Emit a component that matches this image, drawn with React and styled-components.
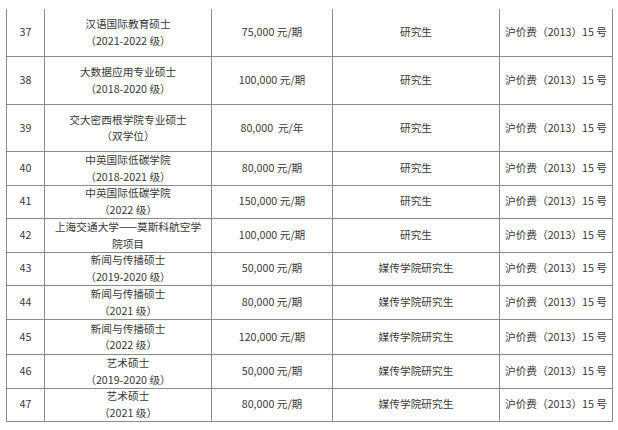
import styled, { createGlobalStyle } from "styled-components";

const GlobalStyle = createGlobalStyle`
  html, body {
    margin: 0;
    padding: 0;
    background: #ffffff;
  }
  body {
    font-family: "Noto Sans CJK SC", "Noto Sans", sans-serif;
    color: #333333;
  }
`;

const rows = [
  { no: 37, name: ["汉语国际教育硕士", "（2021-2022 级）"], fee: "75,000 元/期", who: "研究生", h: 48 },
  { no: 38, name: ["大数据应用专业硕士", "（2018-2020 级）"], fee: "100,000 元/期", who: "研究生", h: 48 },
  { no: 39, name: ["交大密西根学院专业硕士", "（双学位）"], fee: "80,000  元/年", who: "研究生", h: 47 },
  { no: 40, name: ["中英国际低碳学院", "（2018-2021 级）"], fee: "80,000 元/期", who: "研究生", h: 33 },
  { no: 41, name: ["中英国际低碳学院", "（2022 级）"], fee: "150,000 元/期", who: "研究生", h: 34 },
  { no: 42, name: ["上海交通大学——莫斯科航空学", "院项目"], fee: "100,000 元/期", who: "研究生", h: 33 },
  { no: 43, name: ["新闻与传播硕士", "（2019-2020 级）"], fee: "50,000 元/期", who: "媒传学院研究生", h: 34 },
  { no: 44, name: ["新闻与传播硕士", "（2021 级）"], fee: "80,000 元/期", who: "媒传学院研究生", h: 34 },
  { no: 45, name: ["新闻与传播硕士", "（2022 级）"], fee: "120,000 元/期", who: "媒传学院研究生", h: 35 },
  { no: 46, name: ["艺术硕士", "（2019-2020 级）"], fee: "50,000 元/期", who: "媒传学院研究生", h: 33 },
  { no: 47, name: ["艺术硕士", "（2021 级）"], fee: "80,000 元/期", who: "媒传学院研究生", h: 34 },
];

const App = () => {
  return (
    <>
      <GlobalStyle />
      <Page>
        <Table>
          {rows.map((r) => (
            <Row key={r.no} $h={r.h}>
              <Cell>{r.no}</Cell>
              <Cell>
                <Lines>
                  {r.name.map((line) => (
                    <span key={line}>{line}</span>
                  ))}
                </Lines>
              </Cell>
              <Cell>{r.fee}</Cell>
              <Cell>{r.who}</Cell>
              <Cell>沪价费（2013）15 号</Cell>
            </Row>
          ))}
        </Table>
      </Page>
    </>
  );
};

const Page = styled.div`
  padding: 9px 0 0 6px;
  width: 618px;
  height: 430px;
  box-sizing: border-box;
  overflow: hidden;
`;

const Table = styled.div`
  width: 607px;
  border-left: 1px solid #8c8c8c;
  box-sizing: border-box;
`;

const Row = styled.div`
  display: grid;
  grid-template-columns: 38px 167px 121px 167px 113px;
  height: ${(p) => p.$h}px;
`;

const Cell = styled.div`
  box-sizing: border-box;
  border-right: 1px solid #8c8c8c;
  border-bottom: 1px solid #8c8c8c;
  display: flex;
  align-items: center;
  justify-content: center;
  text-align: center;
  font-size: 10.7px;
  line-height: 16.5px;
  white-space: pre;
  color: #3a3a3a;
`;

const Lines = styled.div`
  display: flex;
  flex-direction: column;
  align-items: center;
`;

export default App;
